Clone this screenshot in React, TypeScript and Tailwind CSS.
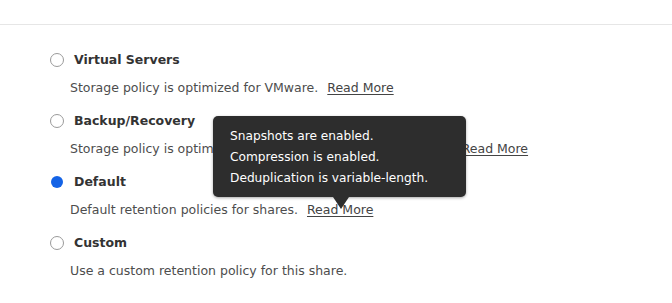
const options = [
  {
    id: 'virtual',
    label: 'Virtual Servers',
    desc: 'Storage policy is optimized for VMware.',
    readMore: true,
  },
  {
    id: 'backup',
    label: 'Backup/Recovery',
    desc: 'Storage policy is optimized for Backup/recovery applications.',
    readMore: true,
  },
  {
    id: 'default',
    label: 'Default',
    desc: 'Default retention policies for shares.',
    readMore: true,
  },
  {
    id: 'custom',
    label: 'Custom',
    desc: 'Use a custom retention policy for this share.',
    readMore: false,
  },
];

function Radio({ checked }: { checked: boolean }) {
  if (checked) {
    return <span className="block w-[12px] h-[12px] rounded-full bg-[#1463e6] shrink-0" />;
  }
  return (
    <span className="block w-[14px] h-[14px] rounded-full border-[1.5px] border-[#9a9a9a] bg-white shrink-0" />
  );
}

export default function App() {
  const selected = 'default';

  return (
    <div
      className="relative w-[672px] h-[303px] bg-white overflow-hidden"
      style={{ fontFamily: '"DejaVu Sans", Verdana, sans-serif' }}
    >
      <div className="h-[25px] border-b border-[#e6e6e6]" />

      <ul className="pt-[25px] pl-[50px]">
        {options.map((opt) => (
          <li key={opt.id} className="mb-[13px]">
            <label className="flex items-center h-[20px] gap-[10px]">
              <span className="w-[14px] flex justify-center">
                <Radio checked={opt.id === selected} />
              </span>
              <span className="text-[12.5px] font-bold text-[#333333]">{opt.label}</span>
            </label>
            <p className="mt-[8px] pl-[20px] h-[20px] leading-[20px] text-[12.5px] text-[#4d4d4d]">
              {opt.desc}
              {opt.readMore && (
                <a className="ml-[9px] underline underline-offset-2 text-[#444444]">Read More</a>
              )}
            </p>
          </li>
        ))}
      </ul>

      {/* tooltip for Default > Read More */}
      <div className="absolute left-[213px] top-[116px] w-[253px] h-[81px] rounded-[5px] bg-[#2d2d2d] shadow-[0_1px_3px_rgba(0,0,0,0.35)] pl-[17px] pt-[10px] text-[12.2px] leading-[21px] text-white">
        <p>Snapshots are enabled.</p>
        <p>Compression is enabled.</p>
        <p>Deduplication is variable-length.</p>
        <span className="absolute left-[120px] bottom-[-12px] w-0 h-0 border-l-[8px] border-r-[8px] border-t-[12px] border-l-transparent border-r-transparent border-t-[#2d2d2d]" />
      </div>
    </div>
  );
}
